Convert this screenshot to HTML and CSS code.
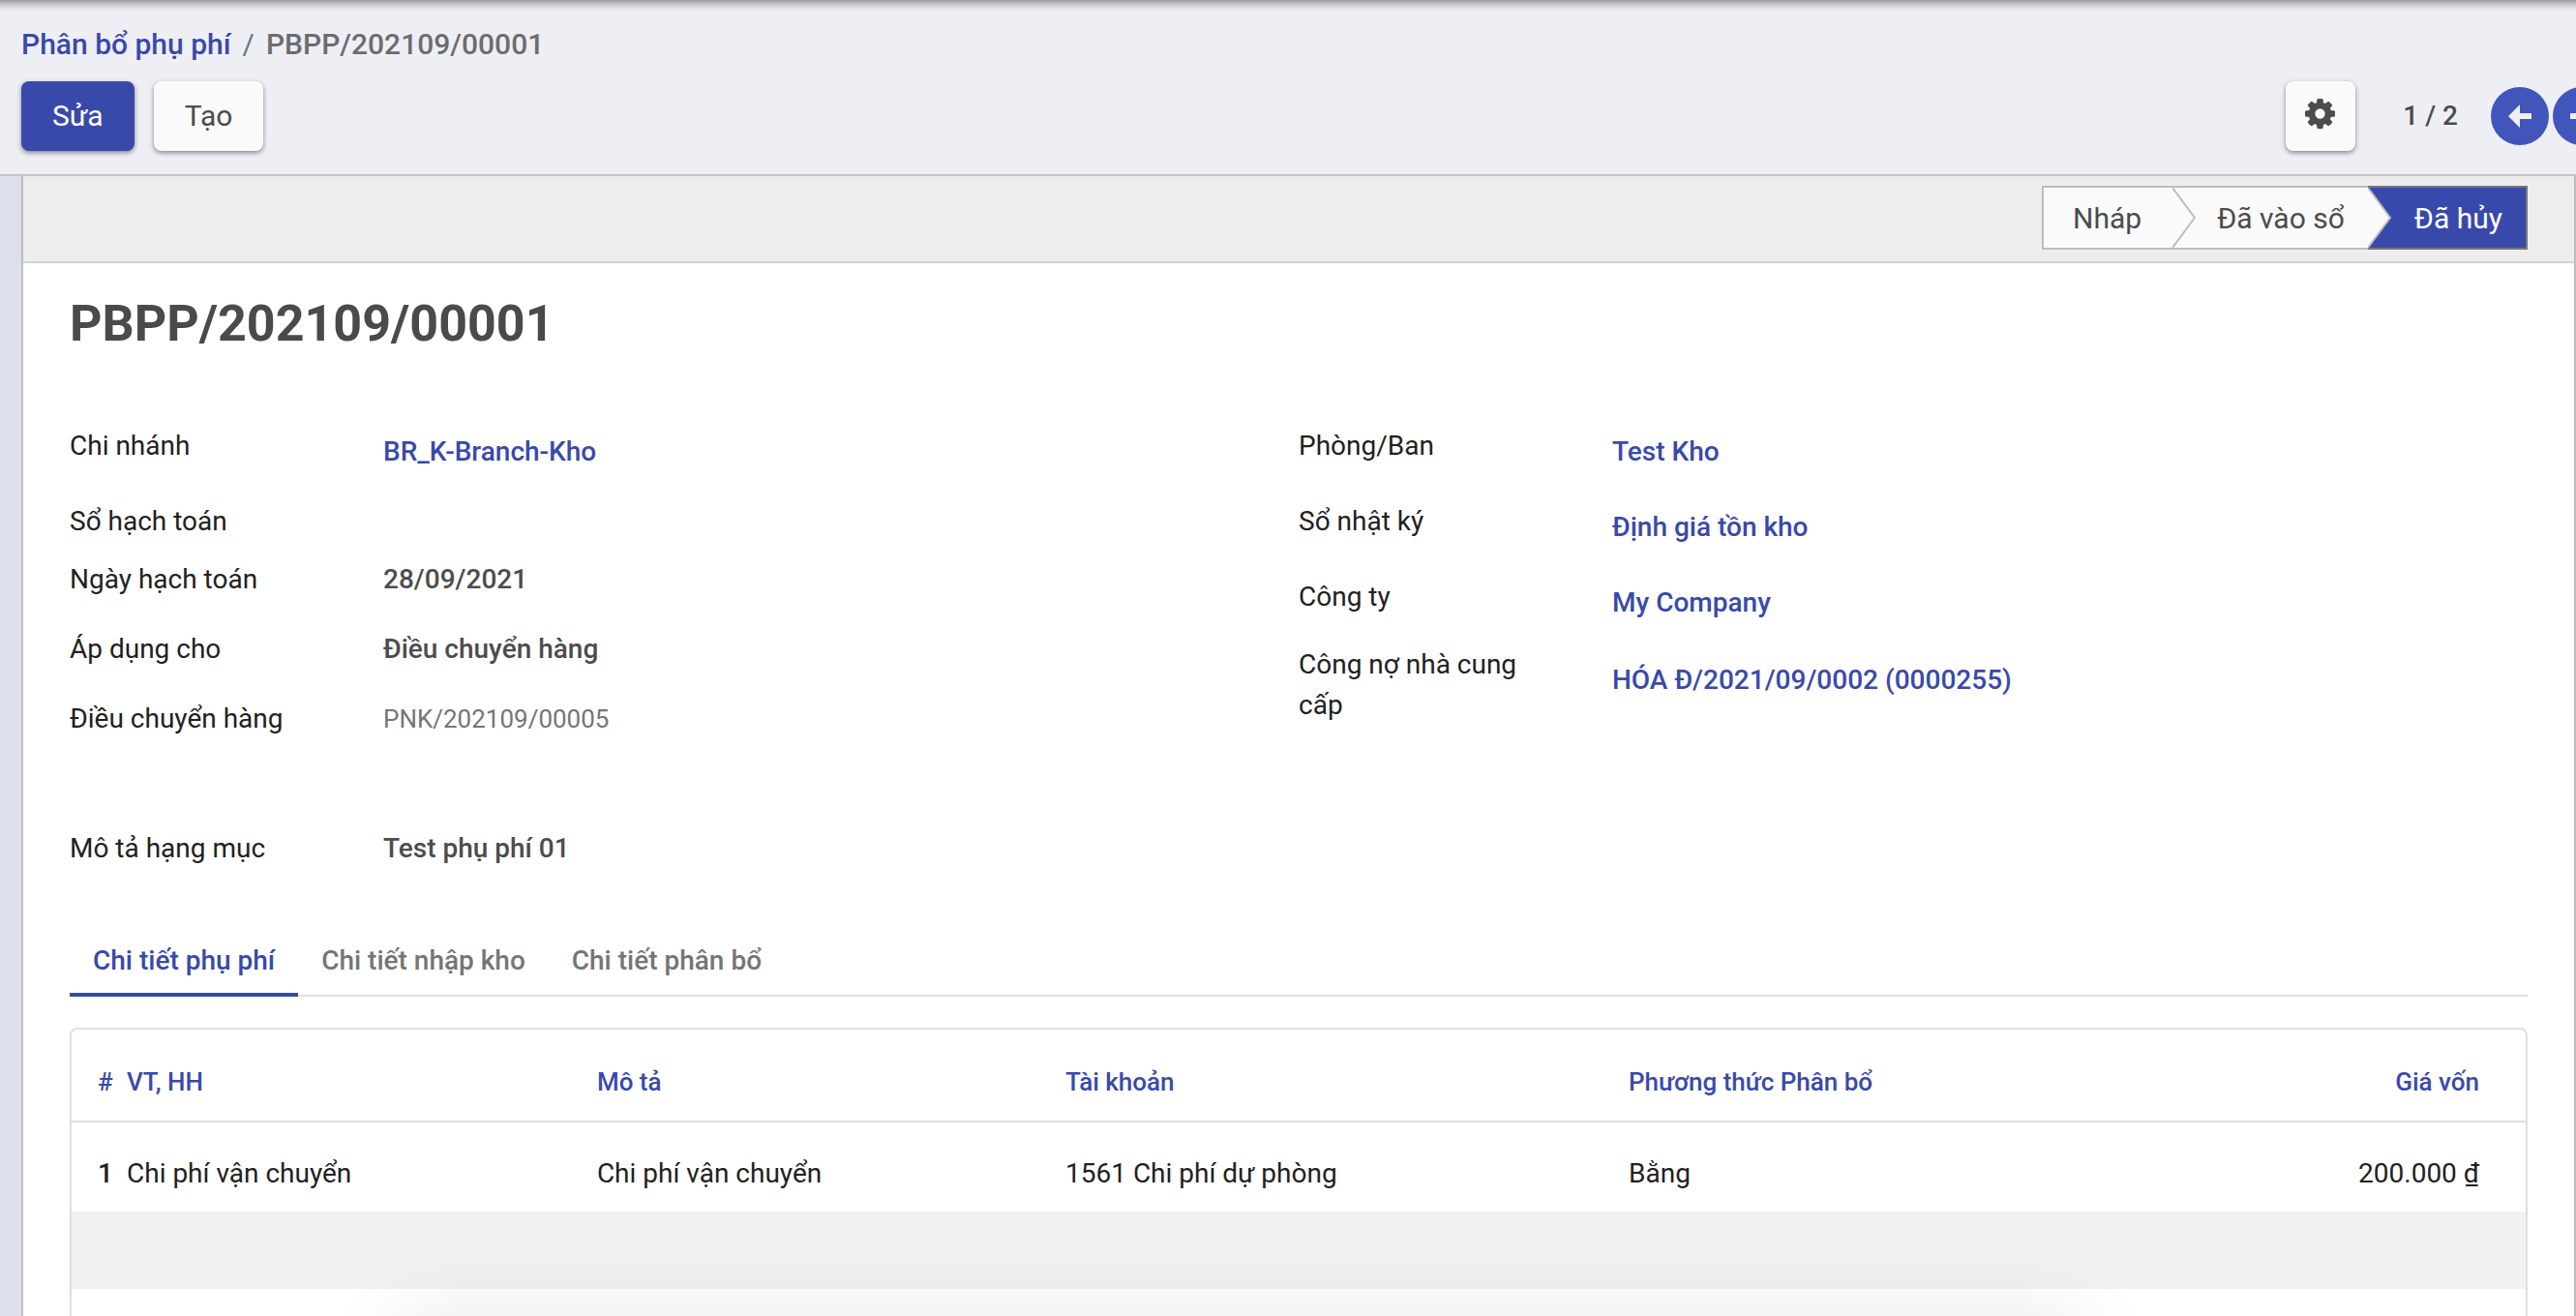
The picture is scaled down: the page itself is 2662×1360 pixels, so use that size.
FILE: index.html
```html
<!DOCTYPE html>
<html lang="vi">
<head>
<meta charset="utf-8">
<meta name="viewport" content="width=device-width, initial-scale=1">
<title>PBPP/202109/00001</title>
<link rel="stylesheet" href="styles.css">
</head>
<body>
<header class="control-panel">
  <nav class="breadcrumb" aria-label="Breadcrumb">
    <a href="#">Phân bổ phụ phí</a>
    <span class="breadcrumb-sep">/</span>
    <span class="breadcrumb-current">PBPP/202109/00001</span>
  </nav>
  <div class="toolbar">
    <button type="button" class="btn btn-primary">Sửa</button>
    <button type="button" class="btn btn-light">Tạo</button>
    <div class="toolbar-right">
      <button type="button" class="btn btn-light btn-icon" aria-label="Cài đặt">
        <svg class="icon-gear" viewBox="0 0 1536 1536" aria-hidden="true"><path d="M1024 768q0-106-75-181t-181-75-181 75-75 181 75 181 181 75 181-75 75-181zm512-109v222q0 12-8 23t-20 13l-185 28q-19 54-39 91 35 50 107 138 10 12 10 25t-9 23q-27 37-99 108t-94 71q-12 0-26-9l-138-108q-44 23-91 38-16 136-29 186-7 28-36 28H657q-14 0-24.500-8.500T621 1506l-28-184q-49-16-90-37l-141 107q-10 9-25 9-14 0-25-11-126-114-165-168-7-10-7-23 0-12 8-23 15-21 51-66.500t54-70.500q-27-50-41-99L29 913q-13-2-21-12.500T0 877V655q0-12 8-23t19-13l186-28q14-46 39-92-40-57-107-138-10-12-10-24 0-10 9-23 26-36 98.500-107.500T337 135q13 0 26 10l138 107q44-23 91-38 16-136 29-186 7-28 36-28h222q14 0 24.500 8.500T915 30l28 184q49 16 90 37l142-107q9-9 24-9 13 0 25 10 129 119 165 170 7 8 7 22 0 12-8 23-15 21-51 66.500t-54 70.500q26 50 41 98l183 28q13 2 21 12.500t8 23.500z"/></svg>
      </button>
      <span class="pager-count">1 / 2</span>
      <div class="pager">
        <button type="button" class="pager-btn" aria-label="Trước">
          <svg class="icon-arrow" viewBox="0 0 24 24" aria-hidden="true"><path d="M0 12 12 0V9H24V15H12V24Z"/></svg>
        </button>
        <button type="button" class="pager-btn" aria-label="Sau">
          <svg class="icon-arrow" viewBox="0 0 24 24" aria-hidden="true"><path d="M24 12 12 0V9H0V15H12V24Z"/></svg>
        </button>
      </div>
    </div>
  </div>
</header>

<main class="sheet">
  <div class="statusbar">
    <div class="status-steps">
      <button type="button" class="step">Nháp<svg class="step-arrow" viewBox="0 0 24 62" aria-hidden="true"><path class="step-fill" d="M0 0 23 31 0 62Z"/><path class="step-line" d="M0 0 23 31 0 62"/></svg></button>
      <button type="button" class="step">Đã vào sổ<svg class="step-arrow" viewBox="0 0 24 62" aria-hidden="true"><path class="step-fill" d="M0 0 23 31 0 62Z"/><path class="step-line" d="M0 0 23 31 0 62"/></svg></button>
      <button type="button" class="step step-current" aria-current="step">Đã hủy</button>
    </div>
  </div>

  <div class="sheet-body">
    <h1 class="title">PBPP/202109/00001</h1>

    <div class="groups">
      <dl class="group">
        <div class="field field-link"><dt>Chi nhánh</dt><dd><a href="#">BR_K-Branch-Kho</a></dd></div>
        <div class="field field-empty"><dt>Sổ hạch toán</dt><dd></dd></div>
        <div class="field"><dt>Ngày hạch toán</dt><dd>28/09/2021</dd></div>
        <div class="field"><dt>Áp dụng cho</dt><dd>Điều chuyển hàng</dd></div>
        <div class="field"><dt>Điều chuyển hàng</dt><dd class="muted">PNK/202109/00005</dd></div>
      </dl>
      <dl class="group">
        <div class="field field-link"><dt>Phòng/Ban</dt><dd><a href="#">Test Kho</a></dd></div>
        <div class="field field-link"><dt>Sổ nhật ký</dt><dd><a href="#">Định giá tồn kho</a></dd></div>
        <div class="field field-link"><dt>Công ty</dt><dd><a href="#">My Company</a></dd></div>
        <div class="field field-tall"><dt>Công nợ nhà cung cấp</dt><dd><a href="#">HÓA Đ/2021/09/0002 (0000255)</a></dd></div>
      </dl>
      <dl class="group">
        <div class="field"><dt>Mô tả hạng mục</dt><dd>Test phụ phí 01</dd></div>
      </dl>
    </div>

    <div class="tabs" role="tablist">
      <button type="button" class="tab tab-active" role="tab" aria-selected="true">Chi tiết phụ phí</button>
      <button type="button" class="tab" role="tab" aria-selected="false">Chi tiết nhập kho</button>
      <button type="button" class="tab" role="tab" aria-selected="false">Chi tiết phân bổ</button>
    </div>

    <div class="table-frame">
      <table class="lines">
        <colgroup><col class="col-num"><col class="col-item"><col class="col-desc"><col class="col-account"><col class="col-method"><col></colgroup>
        <thead>
          <tr><th scope="col">#</th><th scope="col">VT, HH</th><th scope="col">Mô tả</th><th scope="col">Tài khoản</th><th scope="col">Phương thức Phân bổ</th><th scope="col" class="amount">Giá vốn</th></tr>
        </thead>
        <tbody>
          <tr><th scope="row">1</th><td>Chi phí vận chuyển</td><td>Chi phí vận chuyển</td><td>1561 Chi phí dự phòng</td><td>Bằng</td><td class="amount">200.000 ₫</td></tr>
          <tr class="blank"><td colspan="6"></td></tr>
          <tr class="blank"><td colspan="6"></td></tr>
        </tbody>
      </table>
    </div>
  </div>
</main>
<div class="overlay-shadow" aria-hidden="true"></div>
</body>
</html>
```
FILE: styles.css
```css
:root {
  --primary: #3949ab;
  --text: #212121;
  --text-soft: #4c4c4c;
  --line: #dfdfdf;
}

* {
  box-sizing: border-box;
}

html {
  height: 100%;
  overflow: hidden;
}

body {
  margin: 0;
  height: 100%;
  overflow: hidden;
  display: flex;
  flex-direction: column;
  background: #dddfeb;
  color: var(--text);
  font: 400 28px/42px Roboto, "Noto Sans", sans-serif;
}

button {
  font: inherit;
  border: 0;
  padding: 0;
  cursor: pointer;
}

a {
  color: var(--primary);
  font-weight: 500;
  text-decoration: none;
}

svg {
  display: block;
}

/* Control panel */
.control-panel {
  flex: none;
  padding: 25px 0 24px 22px;
  background: linear-gradient(#9b9ca0, #c4c5ca 4px, #e4e5eb 9px, #eeeff5 14px);
  border-bottom: 2px solid #c6c6ca;
}

.breadcrumb {
  display: flex;
  gap: 12px;
  height: 59px;
  font-size: 30px;
  font-weight: 500;
}

.breadcrumb-sep {
  color: #6c757d;
  font-weight: 400;
}

.breadcrumb-current {
  color: #6c6c6f;
}

.toolbar {
  display: flex;
  gap: 20px;
}

.toolbar-right {
  display: flex;
  align-items: center;
  margin-left: auto;
}

.btn {
  height: 72px;
  padding: 0 32px;
  border-radius: 8px;
  font-size: 30px;
  box-shadow: 0 2px 5px rgba(0, 0, 0, 0.45);
}

.btn-primary {
  background: var(--primary);
  color: #fff;
}

.btn-light {
  background: #fafafa;
  color: var(--text-soft);
}

.btn-icon {
  width: 72px;
  padding: 0 20px 6px;
}

.icon-gear {
  width: 31px;
  height: 31px;
  fill: #4c4c4c;
}

.pager-count {
  margin: 0 34px 0 49px;
  color: var(--text-soft);
  font-weight: 500;
}

.pager {
  display: flex;
  gap: 4px;
  width: 88px;
}

.pager-btn {
  flex: none;
  display: flex;
  align-items: center;
  justify-content: center;
  width: 60px;
  height: 60px;
  border-radius: 50%;
  background: #4255bb;
}

.icon-arrow {
  width: 24px;
  height: 24px;
  fill: #eeeff5;
}

/* Sheet */
.sheet {
  flex: 1;
  margin-left: 22px;
  border: solid #bdbdbd;
  border-width: 0 2px;
  background: #fff;
}

.statusbar {
  display: flex;
  justify-content: flex-end;
  padding: 10px 48px 12px;
  background: #ededed;
  border-bottom: 2px solid #ced4da;
}

.status-steps {
  display: flex;
  height: 66px;
}

.step {
  position: relative;
  padding: 2px 24px 0 46px;
  background: #fafafa;
  border: solid #bdbdbd;
  border-width: 2px 0;
  color: var(--text-soft);
  font-size: 30px;
}

.step:first-child {
  padding: 2px 32px 0 30px;
  border-left-width: 2px;
}

.step-current {
  padding-left: 48px;
  background: var(--primary);
  border-color: #757575;
  border-right-width: 2px;
  color: #fff;
}

.step-arrow {
  position: absolute;
  z-index: 1;
  top: 0;
  left: 100%;
  width: 24px;
  height: 62px;
}

.step-fill {
  fill: #fafafa;
}

.step-line {
  fill: none;
  stroke: #bdbdbd;
  stroke-width: 2;
}

.sheet-body {
  padding: 29px 48px 0;
}

.title {
  margin: 0 0 63px;
  font-size: 52px;
  line-height: 68px;
  font-weight: 700;
  color: #4a4a4a;
}

.groups {
  display: grid;
  grid-template-columns: 1fr 1fr;
  row-gap: 62px;
}

.group {
  margin: 0;
}

.field {
  display: grid;
  grid-template-columns: 240px 1fr;
  column-gap: 84px;
  min-height: 72px;
  padding-top: 8px;
}

.field dd {
  margin: 0;
  color: var(--text-soft);
  font-weight: 500;
}

.field .muted {
  color: #757575;
  font-size: 26px;
  font-weight: 400;
}

.field-link {
  min-height: 78px;
}

.field-link dd {
  padding-top: 6px;
}

.field-empty {
  min-height: 60px;
}

.field-tall {
  padding-top: 0;
}

.field-tall dd {
  padding-top: 16px;
}

/* Tabs */
.tabs {
  display: flex;
  margin-top: 40px;
  box-shadow: inset 0 -2px var(--line);
}

.tab {
  height: 70px;
  padding: 0 24px;
  background: none;
  border-bottom: 4px solid transparent;
  color: #757575;
  font-weight: 500;
}

.tab-active {
  color: var(--primary);
  border-bottom-color: var(--primary);
}

/* Lines table */
.table-frame {
  margin-top: 32px;
  border: 2px solid var(--line);
  border-bottom: 0;
  border-radius: 8px 8px 0 0;
}

.lines {
  width: 100%;
  table-layout: fixed;
  border-spacing: 0;
  text-align: left;
}

.col-num {
  width: 49px;
}

.col-item {
  width: 19.16%;
}

.col-desc {
  width: 19.09%;
}

.col-account {
  width: 22.95%;
}

.col-method {
  width: 24%;
}

.lines th,
.lines td {
  padding: 14px 8px 0;
  height: 92px;
}

.lines th:first-child {
  padding-left: 27px;
  padding-right: 0;
}

.lines thead th {
  height: 96px;
  border-bottom: 2px solid var(--line);
  color: var(--primary);
  font-size: 26px;
  font-weight: 500;
}

.lines tbody th {
  font-weight: 500;
}

.lines .amount {
  padding-right: 48px;
  text-align: right;
}

.lines .blank td {
  height: 80px;
  padding: 0;
}

.lines tbody tr:nth-child(even) {
  background: #f1f1f1;
}

/* Soft shadow rising from the bottom edge */
.overlay-shadow {
  position: fixed;
  left: 420px;
  right: 520px;
  bottom: -60px;
  height: 40px;
  box-shadow: 0 0 90px rgba(0, 0, 0, 0.2);
}
```
